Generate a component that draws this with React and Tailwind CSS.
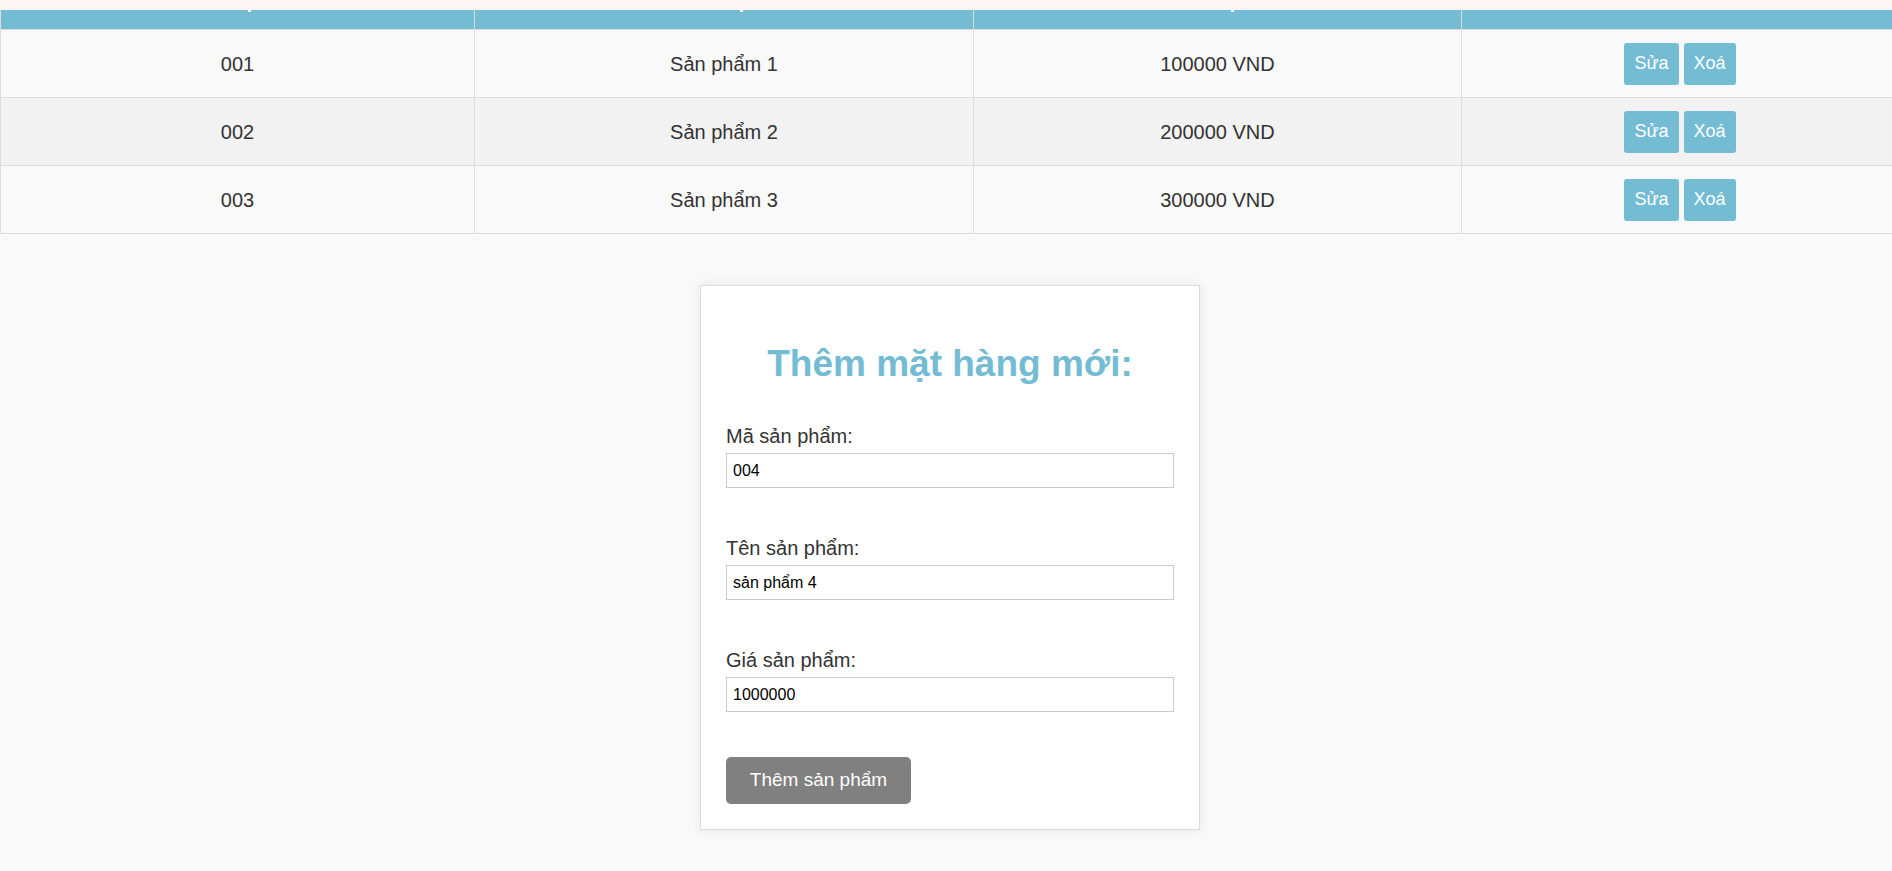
import React from 'react';

const PRODUCTS = [
  { id: '001', name: 'Sản phẩm 1', price: 100000 },
  { id: '002', name: 'Sản phẩm 2', price: 200000 },
  { id: '003', name: 'Sản phẩm 3', price: 300000 },
];

const FIELDS = [
  { label: 'Mã sản phẩm:', value: '004' },
  { label: 'Tên sản phẩm:', value: 'sản phẩm 4' },
  { label: 'Giá sản phẩm:', value: '1000000' },
];

const cell = 'flex items-center justify-center border-r border-b border-[#dddddd] text-[20px] text-[#333333]';

const App = () => {
  return (
    <div className="min-h-screen bg-[#f9f9f9] font-['Liberation_Sans',Arial,sans-serif]">
      {/* top strip left over from the scrolled page */}
      <div className="h-[10px] bg-[#fef6f6]" />

      {/* Products table */}
      <div className="grid grid-cols-[475px_499px_488px_1fr]">
        {/* header row (text is scrolled off, only descenders show) */}
        <div className="h-[20px] bg-[#73bcd4] border-l border-r border-b border-[#dddddd] flex justify-center">
          <span className="ml-[24px] w-[3px] h-[2px] bg-white" />
        </div>
        <div className="h-[20px] bg-[#73bcd4] border-r border-b border-[#dddddd] flex justify-center">
          <span className="ml-[34px] w-[3px] h-[2px] bg-white" />
        </div>
        <div className="h-[20px] bg-[#73bcd4] border-r border-b border-[#dddddd] flex justify-center">
          <span className="ml-[30px] w-[3px] h-[2px] bg-white" />
        </div>
        <div className="h-[20px] bg-[#73bcd4] border-b border-[#dddddd]" />

        {PRODUCTS.map((p, i) => {
          const bg = i % 2 === 1 ? 'bg-[#f2f2f2]' : 'bg-[#f9f9f9]';
          return (
            <React.Fragment key={p.id}>
              <div className={`${cell} ${bg} h-[68px] border-l`}>{p.id}</div>
              <div className={`${cell} ${bg} h-[68px]`}>{p.name}</div>
              <div className={`${cell} ${bg} h-[68px]`}>{p.price} VND</div>
              <div className={`${bg} h-[68px] border-b border-[#dddddd] flex items-center justify-center gap-[5px] pl-[6px]`}>
                <button className="h-[42px] px-[10px] rounded-[3px] bg-[#73bcd4] text-white text-[18px]">Sửa</button>
                <button className="h-[42px] px-[10px] rounded-[3px] bg-[#73bcd4] text-white text-[18px]">Xoá</button>
              </div>
            </React.Fragment>
          );
        })}
      </div>

      {/* Add form */}
      <div className="flex justify-center pl-[8px] pt-[51px] pb-[42px]">
        <div className="w-[500px] bg-white border border-[#dddddd] shadow-[0_0_10px_rgba(0,0,0,0.08)] p-[25px]">
          <h2 className="mt-[31px] text-center text-[37px] leading-[44px] font-bold text-[#73bcd4]">
            Thêm mặt hàng mới:
          </h2>

          <div className="mt-[39px]">
            {FIELDS.map((f) => (
              <div key={f.label} className="mb-[49px] last:mb-[45px]">
                <label className="block text-[20px] leading-[23px] text-[#333333] mb-[5px]">{f.label}</label>
                <input
                  readOnly
                  value={f.value}
                  className="block w-full h-[35px] border border-[#cccccc] px-[6px] text-[16px] text-black bg-white outline-none font-['Liberation_Sans',Arial,sans-serif]"
                />
              </div>
            ))}
          </div>

          <button className="h-[47px] w-[185px] rounded-[5px] bg-[#808080] text-white text-[19px]">
            Thêm sản phẩm
          </button>
        </div>
      </div>
    </div>
  );
};

export default App;
